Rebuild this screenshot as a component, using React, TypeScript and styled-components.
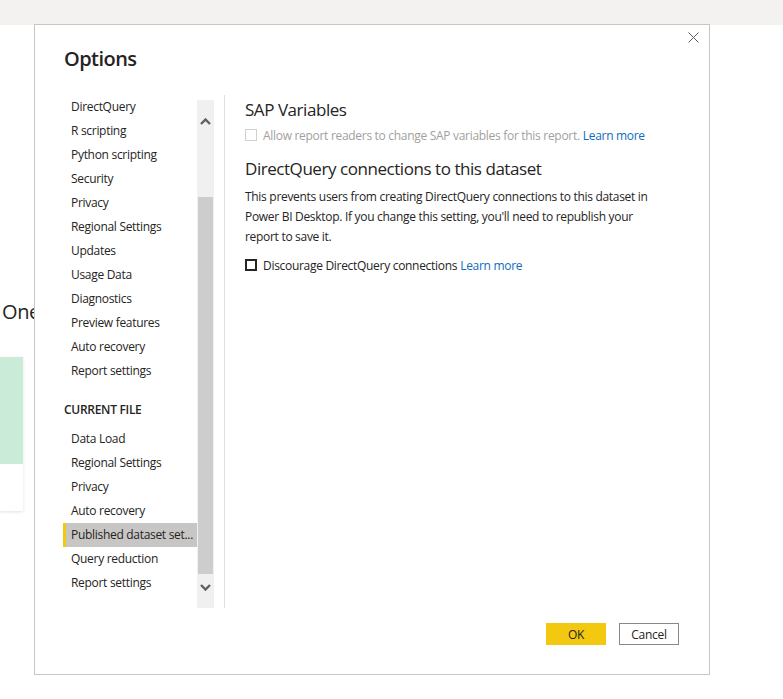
import React from 'react';
import styled, { createGlobalStyle } from 'styled-components';

const GlobalStyle = createGlobalStyle`
  html, body {
    margin: 0;
    padding: 0;
    background: #ffffff;
  }
  body {
    font-family: 'Open Sans', 'Noto Sans', sans-serif;
    color: #252423;
  }
`;

const Page = styled.div`
  position: relative;
  width: 783px;
  height: 699px;
  overflow: hidden;
  background: #ffffff;
`;

const TopBand = styled.div`
  height: 25px;
  background: #f3f2f1;
`;

const BackHeading = styled.div`
  margin: 273px 0 0 2px;
  font-size: 20px;
  line-height: 28px;
  letter-spacing: -0.4px;
  color: #252423;
`;

const BackCard = styled.div`
  margin-top: 31px;
  width: 23px;
  height: 154px;
  background: #ffffff;
  box-shadow: 0 1px 3px rgba(0, 0, 0, 0.12);
`;

const BackCardFill = styled.div`
  height: 107px;
  background: #c9ebd8;
`;

const Dialog = styled.div`
  position: absolute;
  left: 34px;
  top: 24px;
  width: 674px;
  height: 649px;
  background: #ffffff;
  border: 1px solid #c8c6c4;
  display: flex;
  flex-direction: column;
`;

const CloseButton = styled.button`
  position: absolute;
  top: 7px;
  right: 10px;
  width: 11px;
  height: 11px;
  padding: 0;
  border: none;
  background: transparent;
  display: flex;
`;

const Title = styled.h1`
  margin: 20px 0 0 29px;
  height: 28px;
  font-size: 20px;
  line-height: 28px;
  font-weight: 600;
  letter-spacing: -0.55px;
  color: #252423;
`;

const Body = styled.div`
  display: flex;
  margin-top: 22px;
  height: 513px;
`;

const NavColumn = styled.div`
  display: flex;
  margin-left: 28px;
`;

const NavList = styled.ul`
  list-style: none;
  margin: 0;
  padding: 0;
  width: 134px;
  overflow: hidden;
`;

const NavItem = styled.li<{ $active?: boolean }>`
  height: 24px;
  line-height: 24px;
  font-size: 12px;
  letter-spacing: -0.3px;
  padding-left: ${({ $active }) => ($active ? '5px' : '8px')};
  border-left: ${({ $active }) => ($active ? '3px solid #f2c811' : 'none')};
  background: ${({ $active }) => ($active ? '#c8c6c4' : 'transparent')};
  color: #252423;
  white-space: nowrap;
`;

const NavHeader = styled.li`
  margin: 15px 0 5px;
  height: 24px;
  line-height: 24px;
  font-size: 12px;
  font-weight: 600;
  letter-spacing: -0.3px;
  text-transform: uppercase;
  padding-left: 1px;
  color: #252423;
`;

const Scrollbar = styled.div`
  position: relative;
  margin-top: 5px;
  width: 17px;
  height: 508px;
  background: #f0f0f0;
`;

const ScrollArrow = styled.div<{ $down?: boolean }>`
  position: absolute;
  left: 0;
  width: 17px;
  height: 20px;
  display: flex;
  align-items: center;
  justify-content: center;
  ${({ $down }) => ($down ? 'bottom: 11px;' : 'top: 11px;')}
`;

const ScrollThumb = styled.div`
  position: absolute;
  left: 1px;
  width: 15px;
  background: #cdcdcd;
`;

const Divider = styled.div`
  width: 1px;
  margin-left: 10px;
  background: #e1dfdd;
`;

const Content = styled.div`
  flex: 1;
  padding-left: 20px;
  padding-right: 30px;
`;

const SectionTitle = styled.h2<{ $gap?: number }>`
  margin: ${({ $gap }) => $gap ?? 0}px 0 0;
  font-size: 17px;
  line-height: 24px;
  font-weight: 400;
  letter-spacing: -0.45px;
  color: #252423;
`;

const CheckRow = styled.label<{ $disabled?: boolean }>`
  display: flex;
  align-items: center;
  gap: 6px;
  margin-top: ${({ $disabled }) => ($disabled ? '3px' : '8px')};
  height: 20px;
  font-size: 12px;
  letter-spacing: -0.3px;
  color: ${({ $disabled }) => ($disabled ? '#a19f9d' : '#252423')};
`;

const Box = styled.span<{ $disabled?: boolean }>`
  width: 12px;
  height: 12px;
  box-sizing: border-box;
  border: ${({ $disabled }) => ($disabled ? '1px solid #d2d0ce' : '2px solid #252423')};
  background: #ffffff;
  flex: none;
`;

const LearnMore = styled.a`
  color: #0f6cbd;
  text-decoration: none;
  margin-left: 3px;
`;

const Paragraph = styled.p`
  margin: 6px 0 0;
  font-size: 12px;
  line-height: 20px;
  letter-spacing: -0.3px;
  color: #252423;
  max-width: 410px;
`;

const Footer = styled.div`
  display: flex;
  justify-content: flex-end;
  gap: 13px;
  margin-top: 15px;
  padding-right: 30px;
`;

const Button = styled.button<{ $primary?: boolean }>`
  width: 60px;
  height: 22px;
  box-sizing: border-box;
  font-family: inherit;
  font-size: 12px;
  letter-spacing: -0.3px;
  color: #252423;
  background: ${({ $primary }) => ($primary ? '#f2c811' : '#ffffff')};
  border: ${({ $primary }) => ($primary ? 'none' : '1px solid #8a8886')};
  padding: 0;
`;

const globalItems = [
  'DirectQuery',
  'R scripting',
  'Python scripting',
  'Security',
  'Privacy',
  'Regional Settings',
  'Updates',
  'Usage Data',
  'Diagnostics',
  'Preview features',
  'Auto recovery',
  'Report settings',
];

const fileItems = [
  'Data Load',
  'Regional Settings',
  'Privacy',
  'Auto recovery',
  'Published dataset set...',
  'Query reduction',
  'Report settings',
];

const activeItem = 'Published dataset set...';

const Chevron = ({ down }: { down?: boolean }) => (
  <svg width="11" height="7" viewBox="0 0 11 7">
    <polyline
      points={down ? '1,1 5.5,5.5 10,1' : '1,6 5.5,1.5 10,6'}
      fill="none"
      stroke="#606060"
      strokeWidth="2.4"
    />
  </svg>
);

export default function App() {
  const thumbTop = 97;
  const thumbHeight = 377;

  return (
    <>
      <GlobalStyle />
      <Page>
        <TopBand />
        <BackHeading>One</BackHeading>
        <BackCard>
          <BackCardFill />
        </BackCard>

        <Dialog role="dialog" aria-label="Options">
          <CloseButton aria-label="Close">
            <svg width="11" height="11" viewBox="0 0 11 11">
              <path d="M0.5 0.5 L10.5 10.5 M10.5 0.5 L0.5 10.5" stroke="#605e5c" strokeWidth="1" />
            </svg>
          </CloseButton>
          <Title>Options</Title>

          <Body>
            <NavColumn>
              <NavList>
                {globalItems.map((item) => (
                  <NavItem key={`g-${item}`}>{item}</NavItem>
                ))}
                <NavHeader>Current file</NavHeader>
                {fileItems.map((item) => (
                  <NavItem key={`f-${item}`} $active={item === activeItem}>
                    {item}
                  </NavItem>
                ))}
              </NavList>
              <Scrollbar>
                <ScrollArrow>
                  <Chevron />
                </ScrollArrow>
                <ScrollThumb style={{ top: thumbTop, height: thumbHeight }} />
                <ScrollArrow $down>
                  <Chevron down />
                </ScrollArrow>
              </Scrollbar>
            </NavColumn>
            <Divider />

            <Content>
              <SectionTitle $gap={3}>SAP Variables</SectionTitle>
              <CheckRow $disabled>
                <Box $disabled />
                <span>
                  Allow report readers to change SAP variables for this report.
                  <LearnMore href="#">Learn more</LearnMore>
                </span>
              </CheckRow>
              <SectionTitle $gap={12}>DirectQuery connections to this dataset</SectionTitle>
              <Paragraph>
                This prevents users from creating DirectQuery connections to this dataset in Power BI
                Desktop. If you change this setting, you'll need to republish your report to save it.
              </Paragraph>
              <CheckRow>
                <Box />
                <span>
                  Discourage DirectQuery connections
                  <LearnMore href="#">Learn more</LearnMore>
                </span>
              </CheckRow>
            </Content>
          </Body>

          <Footer>
            <Button $primary>OK</Button>
            <Button>Cancel</Button>
          </Footer>
        </Dialog>
      </Page>
    </>
  );
}
